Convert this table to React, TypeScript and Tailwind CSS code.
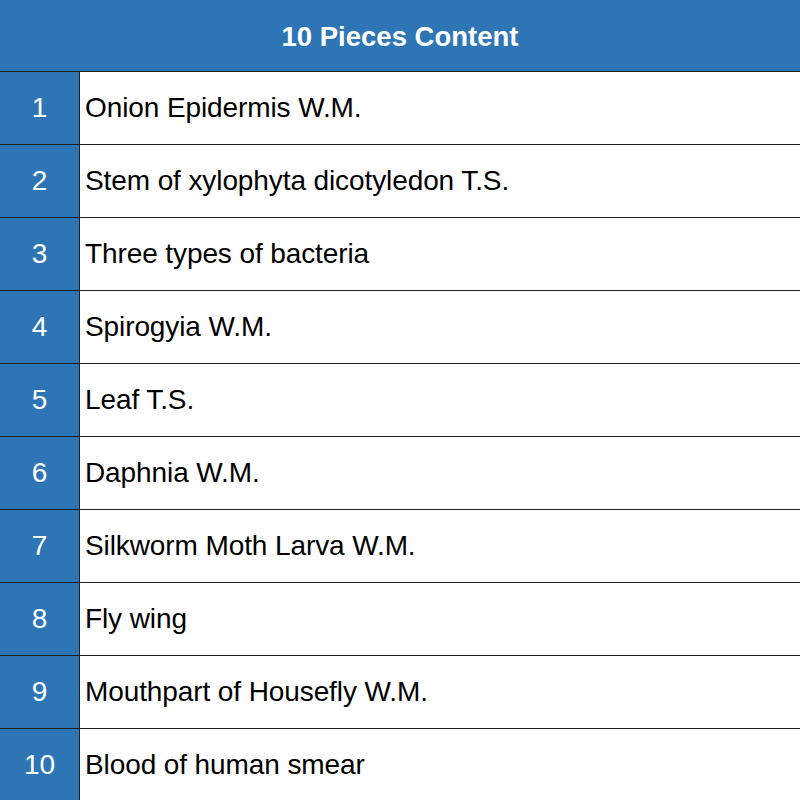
const items = [
  "Onion Epidermis W.M.",
  "Stem of xylophyta dicotyledon T.S.",
  "Three types of bacteria",
  "Spirogyia W.M.",
  "Leaf T.S.",
  "Daphnia W.M.",
  "Silkworm Moth Larva W.M.",
  "Fly wing",
  "Mouthpart of Housefly W.M.",
  "Blood of human smear",
];

export default function App() {
  return (
    <div className="flex h-[800px] w-[800px] flex-col overflow-hidden bg-white font-['Liberation_Sans',Arial,sans-serif]">
      {/* Header */}
      <div className="flex h-[71px] shrink-0 items-center justify-center bg-[#2e75b6] pt-[2px] text-[27.5px] font-bold text-white">
        10 Pieces Content
      </div>

      {items.map((text, i) => (
        <div
          key={text}
          className="flex h-[73px] shrink-0 border-t border-[#1f1f1f]"
        >
          <div className="flex w-[80px] shrink-0 items-center justify-center border-r border-[#1f1f1f] bg-[#2e75b6] text-[28px] text-white">
            {i + 1}
          </div>
          <div className="flex flex-1 items-center pl-[5px] text-[28px] tracking-[-0.1px] text-black">
            {text}
          </div>
        </div>
      ))}
    </div>
  );
}
